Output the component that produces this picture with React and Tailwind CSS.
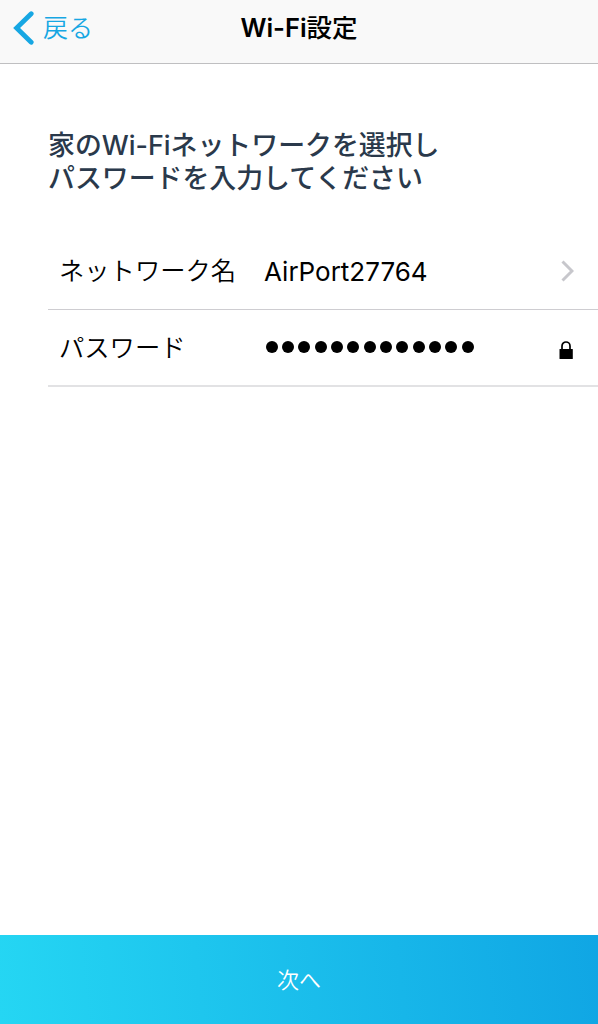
import React, { useState } from 'react';

const NETWORK = 'AirPort27764';

function NavBar() {
  return (
    <header className="grid h-16 grid-cols-3 items-center border-b border-[#bfbfc1] bg-[#f9f9f9] pb-2">
      <button className="flex items-center pl-[13px] text-[#17a7e3]">
        <svg width="22" height="34" viewBox="0 0 22 34" fill="none" stroke="currentColor" strokeWidth="4.8" strokeLinecap="round">
          <path d="M18.2 2.7 L3.6 17 L18.2 31.3" />
        </svg>
        <span className="ml-2 pt-px text-[25px] leading-8 font-[350] whitespace-nowrap">戻る</span>
      </button>
      <h1 className="pt-px text-center text-[25.5px] leading-8 font-semibold whitespace-nowrap text-black">
        Wi-Fi<span className="font-medium">設定</span>
      </h1>
    </header>
  );
}

function Row({ label, children, icon }) {
  return (
    <div className="flex h-[77px] items-center border-b border-[#cecdd1] pl-[11px] last:border-b-2 last:border-[#e2e2e4]">
      <span className="w-[205px] text-[25.3px] font-[350] whitespace-nowrap">{label}</span>
      <div className="flex-1">{children}</div>
      {icon}
    </div>
  );
}

export default function App() {
  const [password] = useState('x'.repeat(13));

  return (
    <div className="flex h-screen flex-col bg-white font-[Inter,'Noto_Sans_CJK_JP',sans-serif] text-black">
      <NavBar />

      <main className="flex-1 pl-12">
        <h2 className="pt-[65px] text-[26.9px] leading-[33px] font-medium whitespace-nowrap text-[#2a394b]">
          家のWi-Fiネットワークを選択し<br />
          パスワードを入力してください
        </h2>

        <div className="mt-[38px]">
          <Row
            label="ネットワーク名"
            icon={
              <svg className="mr-6" width="13" height="22" viewBox="0 0 13 22" fill="none" stroke="#c7c7cc" strokeWidth="3">
                <path d="M1.5 1.5 L11 11 L1.5 20.5" />
              </svg>
            }
          >
            <span className="text-[26px]">{NETWORK}</span>
          </Row>
          <Row
            label="パスワード"
            icon={
              <svg className="mt-[5px] mr-[25px]" width="14" height="18" viewBox="0 0 14 18" fill="none">
                <path d="M3 9 V5 a4 4 0 0 1 8 0 V9" stroke="black" strokeWidth="1.7" />
                <rect x="0.5" y="8" width="13.3" height="10" rx="0.5" fill="black" />
              </svg>
            }
          >
            {/* masked password */}
            <div className="flex gap-[4.35px] pb-px pl-[1.5px]">
              {password.split('').map((_, i) => (
                <span key={i} className="size-3 rounded-full bg-black" />
              ))}
            </div>
          </Row>
        </div>
      </main>

      <button className="h-[89px] bg-linear-[84deg] from-[#25d6f3] to-[#10a6e4] pt-px text-[22px] font-[350] text-white">
        次へ
      </button>
    </div>
  );
}
